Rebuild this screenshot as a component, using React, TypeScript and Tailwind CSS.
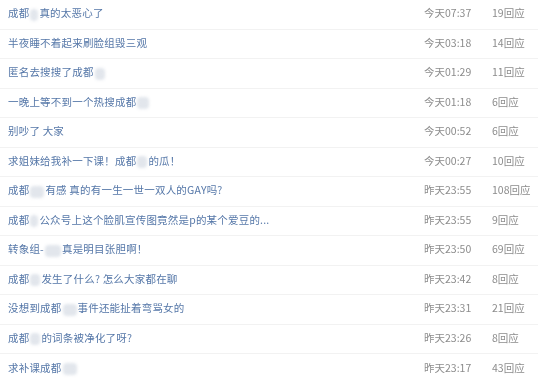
import React from 'react';

interface Row {
    pre: string;
    mask?: string;
    post?: string;
    time: string;
    replies: number;
}

const rows: Row[] = [
    { pre: '成都', mask: 'w-[8px]', post: '真的太恶心了', time: '今天07:37', replies: 19 },
    { pre: '半夜睡不着起来刷脸组毁三观', time: '今天03:18', replies: 14 },
    { pre: '匿名去搜搜了成都', mask: 'w-[10px]', time: '今天01:29', replies: 11 },
    { pre: '一晚上等不到一个热搜成都', mask: 'w-[12px]', time: '今天01:18', replies: 6 },
    { pre: '别吵了 大家', time: '今天00:52', replies: 6 },
    { pre: '求姐妹给我补一下课！成都', mask: 'w-[10px]', post: '的瓜！', time: '今天00:27', replies: 10 },
    { pre: '成都', mask: 'w-[14px]', post: '有感 真的有一生一世一双人的GAY吗?', time: '昨天23:55', replies: 108 },
    { pre: '成都', mask: 'w-[8px]', post: '公众号上这个脸肌宣传图竟然是p的某个爱豆的...', time: '昨天23:55', replies: 9 },
    { pre: '转象组-', mask: 'w-[16px]', post: '真是明目张胆啊！', time: '昨天23:50', replies: 69 },
    { pre: '成都', mask: 'w-[10px]', post: '发生了什么? 怎么大家都在聊', time: '昨天23:42', replies: 8 },
    { pre: '没想到成都', mask: 'w-[14px]', post: '事件还能扯着弯骂女的', time: '昨天23:31', replies: 21 },
    { pre: '成都', mask: 'w-[10px]', post: '的词条被净化了呀?', time: '昨天23:26', replies: 8 },
    { pre: '求补课成都', mask: 'w-[14px]', time: '昨天23:17', replies: 43 },
];

const Mask: React.FC<{ w: string }> = ({ w }) => (
    <span className={`inline-block h-[12px] ${w} mx-[1px] align-middle rounded-sm bg-[#e2e6ec] blur-[1.5px]`} />
);

export default function App() {
    return (
        <div
            className="w-[538px] h-[379px] bg-white overflow-hidden"
            style={{ fontFamily: '"Noto Sans CJK SC", "Noto Sans", sans-serif' }}
        >
            <div className="flex flex-col blur-[0.4px]">
                {rows.map((r, i) => (
                    <div
                        key={i}
                        className={`flex items-center h-[29.5px] pb-[2px] text-[10.5px] tracking-[0.2px] ${i < rows.length - 1 ? 'border-b border-[#f2f2f2]' : ''}`}
                    >
                        <div className="flex-1 pl-2 text-[#5577a8] whitespace-nowrap">
                            {r.pre}
                            {r.mask && <Mask w={r.mask} />}
                            {r.post}
                        </div>
                        <div className="w-[68px] text-[#8c8c8c] tracking-normal">{r.time}</div>
                        <div className="w-[46px] text-[#8c8c8c] tracking-normal">{r.replies}回应</div>
                    </div>
                ))}
            </div>
        </div>
    );
}
